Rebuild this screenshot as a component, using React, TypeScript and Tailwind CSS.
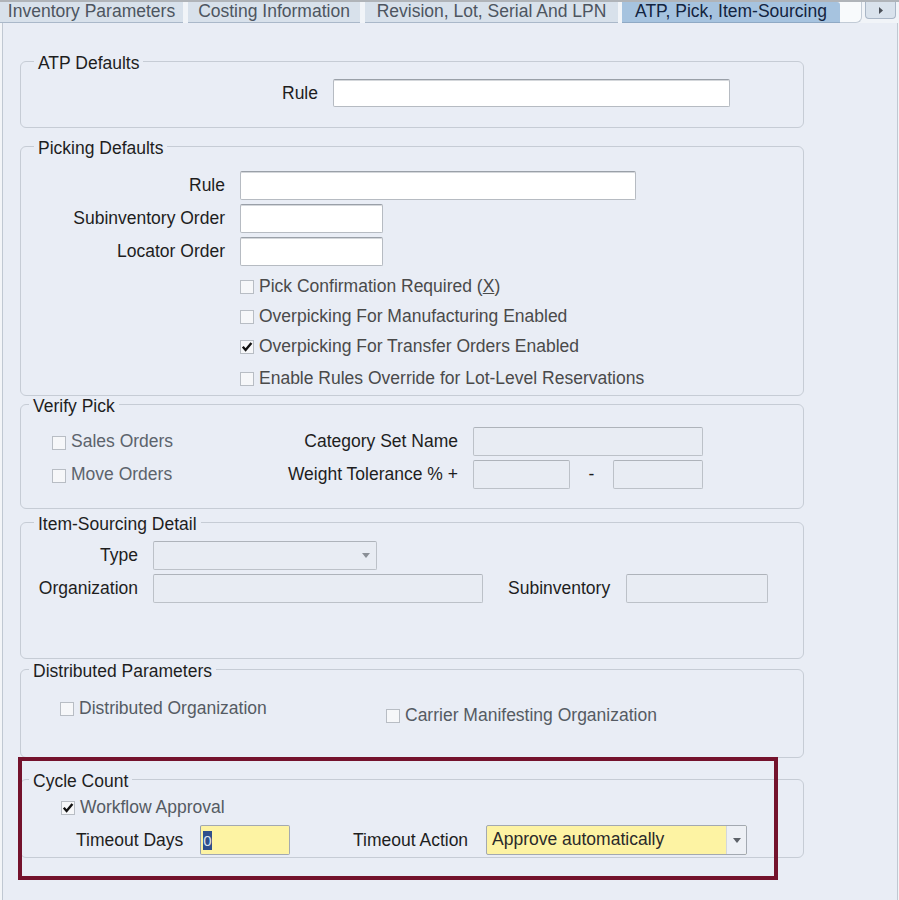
import React from "react";

function Check({ checked = false }: { checked?: boolean }) {
  return (
    <span className="relative inline-block w-[14px] h-[14px] shrink-0 border border-[#b8bdc4] bg-[#f6f7f9] translate-y-[1px]">
      {checked && (
        <svg className="absolute left-0 top-0" width="12" height="12" viewBox="0 0 12 12">
          <path d="M1.8 5.8 L4.6 9 L10.4 2" fill="none" stroke="#111111" strokeWidth="2.4" />
        </svg>
      )}
    </span>
  );
}

function CheckRow({
  checked = false,
  children,
  className = "",
}: {
  checked?: boolean;
  children: React.ReactNode;
  className?: string;
}) {
  return (
    <div className={`flex items-center gap-[5px] ${className}`}>
      <Check checked={checked} />
      <span className="whitespace-nowrap">{children}</span>
    </div>
  );
}

function Input({ className = "", disabled = false }: { className?: string; disabled?: boolean }) {
  return (
    <div
      className={`shrink-0 border rounded-[2px] ${
        disabled
          ? "bg-[#e8ecf3] border-[#bcc1c8] border-t-[#aeb3ba]"
          : "bg-white border-[#b6bbc2] border-t-[#9aa0a8] shadow-[inset_0_1px_0_#d4d7db]"
      } ${className}`}
    />
  );
}

function Arrow({ color = "#7c8188" }: { color?: string }) {
  return (
    <svg width="8" height="5" viewBox="0 0 8 5">
      <path d="M0 0 L8 0 L4 5 Z" fill={color} />
    </svg>
  );
}

function Group({
  title,
  titleLeft,
  className,
  children,
}: {
  title: string;
  titleLeft: string;
  className: string;
  children?: React.ReactNode;
}) {
  return (
    <div className={`relative ml-[17px] w-[784px] border border-[#c6ccd5] rounded-[6px] ${className}`}>
      <span className={`absolute top-[-9px] ${titleLeft} px-[4px] bg-[#e9edf5] leading-[20px] text-[#1e1e1e] whitespace-nowrap`}>
        {title}
      </span>
      {children}
    </div>
  );
}

function Tab({ className, children, active = false }: { className: string; children: React.ReactNode; active?: boolean }) {
  return (
    <div
      className={`shrink-0 h-[21px] leading-[18px] text-center whitespace-nowrap ${
        active
          ? "bg-[#a6c3df] text-[#132440] border-b border-[#8fa9c4]"
          : "bg-[#d8e1eb] text-[#4d5560] border-b border-[#aab8c9]"
      } ${className}`}
    >
      {children}
    </div>
  );
}

export default function App() {
  return (
    <div className="relative w-[899px] h-[900px] overflow-hidden bg-[#f3f5f8] text-[17.5px] text-[#1e1e1e] font-['Liberation_Sans','Arial',sans-serif]">
      {/* Tab bar */}
      <div className="flex h-[23px] border-t-2 border-[#b0b4b9] bg-[#f1f4f8]">
        <Tab className="w-[183px]">Inventory Parameters</Tab>
        <div className="w-[5px] shrink-0" />
        <Tab className="w-[172px]">Costing Information</Tab>
        <div className="w-[5px] shrink-0" />
        <Tab className="w-[253px]">Revision, Lot, Serial And LPN</Tab>
        <div className="w-[4px] shrink-0" />
        <Tab className="w-[218px] rounded-tr-[3px]" active>
          ATP, Pick, Item-Sourcing
        </Tab>
        <div className="w-[22px] h-[21px] shrink-0 bg-[#f8fafc] border-r border-b border-[#c2cbd6] rounded-br-[6px]" />
        <div className="w-[3px] shrink-0" />
        <div className="w-[31px] h-[17px] shrink-0 flex items-center justify-center bg-[#d9e2ec] border border-t-0 border-[#a9b6c6] rounded-b-[4px]">
          <svg width="4" height="7" viewBox="0 0 4 7">
            <path d="M0 0 L4 3.5 L0 7 Z" fill="#4a4f57" />
          </svg>
        </div>
      </div>

      {/* Content panel */}
      <div className="ml-[2px] w-[896px] h-[877px] border-x border-[#c0c8d2] bg-[#e9edf5] pt-[38px]">
        {/* ATP Defaults */}
        <Group title="ATP Defaults" titleLeft="left-[13px]" className="h-[67px]">
          <div className="flex items-center mt-[17px]">
            <span className="w-[297px] text-right">Rule</span>
            <Input className="ml-[15px] w-[397px] h-[28px]" />
          </div>
        </Group>

        {/* Picking Defaults */}
        <Group title="Picking Defaults" titleLeft="left-[13px]" className="mt-[18px] h-[250px]">
          <div className="flex items-center mt-[24px]">
            <span className="w-[204px] text-right">Rule</span>
            <Input className="ml-[15px] w-[396px] h-[29px]" />
          </div>
          <div className="flex items-center mt-[4px]">
            <span className="w-[204px] text-right">Subinventory Order</span>
            <Input className="ml-[15px] w-[143px] h-[29px]" />
          </div>
          <div className="flex items-center mt-[4px]">
            <span className="w-[204px] text-right">Locator Order</span>
            <Input className="ml-[15px] w-[143px] h-[29px]" />
          </div>
          <div className="ml-[219px] mt-[5px] text-[#4a4a4a]">
            <CheckRow className="h-[30px]">
              Pick Confirmation Required (<span className="underline">X</span>)
            </CheckRow>
            <CheckRow className="h-[30px]">Overpicking For Manufacturing Enabled</CheckRow>
            <CheckRow className="h-[30px]" checked>
              Overpicking For Transfer Orders Enabled
            </CheckRow>
            <CheckRow className="h-[30px] mt-[2px]">Enable Rules Override for Lot-Level Reservations</CheckRow>
          </div>
        </Group>

        {/* Verify Pick */}
        <Group title="Verify Pick" titleLeft="left-[8px]" className="mt-[8px] h-[105px]">
          <div className="flex items-center h-[29px] mt-[22px]">
            <div className="w-[200px] pl-[31px] text-[#5c636c]">
              <CheckRow>Sales Orders</CheckRow>
            </div>
            <span className="w-[237px] text-right">Category Set Name</span>
            <Input disabled className="ml-[15px] w-[230px] h-[29px]" />
          </div>
          <div className="flex items-center h-[29px] mt-[4px]">
            <div className="w-[200px] pl-[31px] text-[#5c636c]">
              <CheckRow>Move Orders</CheckRow>
            </div>
            <span className="w-[237px] text-right">Weight Tolerance % +</span>
            <Input disabled className="ml-[15px] w-[97px] h-[29px]" />
            <span className="w-[43px] text-center">-</span>
            <Input disabled className="w-[90px] h-[29px]" />
          </div>
        </Group>

        {/* Item-Sourcing Detail */}
        <Group title="Item-Sourcing Detail" titleLeft="left-[13px]" className="mt-[13px] h-[137px]">
          <div className="flex items-center mt-[18px]">
            <span className="w-[117px] text-right">Type</span>
            <div className="ml-[15px] w-[224px] h-[29px] flex items-center justify-end pr-[6px] bg-[#e8ecf3] border border-[#bcc1c8] border-t-[#aeb3ba] rounded-[2px]">
              <Arrow color="#8a8f96" />
            </div>
          </div>
          <div className="flex items-center mt-[4px]">
            <span className="w-[117px] text-right">Organization</span>
            <Input disabled className="ml-[15px] w-[330px] h-[29px]" />
            <span className="ml-[25px] w-[102px] whitespace-nowrap">Subinventory</span>
            <Input disabled className="ml-[16px] w-[142px] h-[29px]" />
          </div>
        </Group>

        {/* Distributed Parameters */}
        <Group title="Distributed Parameters" titleLeft="left-[8px]" className="mt-[10px] h-[89px]">
          <div className="flex items-start mt-[28px] text-[#555b63] leading-[20px]">
            <div className="w-[365px] pl-[39px]">
              <CheckRow>Distributed Organization</CheckRow>
            </div>
            <CheckRow className="mt-[7px]">Carrier Manifesting Organization</CheckRow>
          </div>
        </Group>

        {/* Cycle Count */}
        <Group title="Cycle Count" titleLeft="left-[8px]" className="mt-[21px] h-[79px]">
          <div className="ml-[40px] mt-[17px] leading-[20px] text-[#555b63]">
            <CheckRow checked>Workflow Approval</CheckRow>
          </div>
          <div className="flex items-center h-[30px] mt-[8px]">
            <span className="ml-[55px] w-[124px] whitespace-nowrap">Timeout Days</span>
            <div className="w-[90px] h-[30px] flex items-center pl-[2px] bg-[#fdf3a3] border border-[#a3a9b1] border-l-[#8f9cb0] rounded-[2px]">
              <span className="inline-block w-[9px] h-[19px] leading-[19px] text-center text-[15px] bg-[#2f4f8c] text-[#dbe3f0]">
                0
              </span>
            </div>
            <span className="ml-[63px] w-[133px] whitespace-nowrap">Timeout Action</span>
            <div className="flex w-[261px] h-[30px] border border-[#a3a9b1] rounded-[2px] bg-[#fdf3a3] overflow-hidden">
              <span className="flex-1 pl-[5px] leading-[27px] text-[#2a2a2a] whitespace-nowrap">Approve automatically</span>
              <span className="w-[20px] flex items-center justify-center bg-[#edf0f5] border-l border-[#d3d7dd]">
                <Arrow color="#5d6269" />
              </span>
            </div>
          </div>
        </Group>
      </div>

      {/* Highlight annotation */}
      <div className="absolute left-[18px] top-[757px] w-[760px] h-[123px] border-[4px] border-[#74122c] pointer-events-none" />
    </div>
  );
}
